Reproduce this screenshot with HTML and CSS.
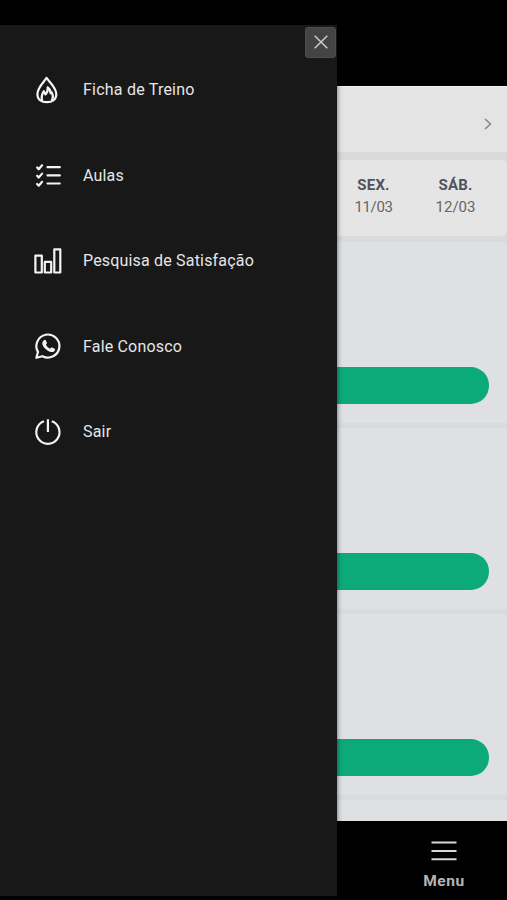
FILE: index.html
```html
<!DOCTYPE html>
<html lang="pt-BR">
<head>
<meta charset="utf-8">
<title>Menu</title>
<link rel="stylesheet" href="styles.css">
</head>
<body>
<div class="app">
  <aside class="drawer">
    <div class="drawer-head">
      <button class="close" aria-label="Fechar"><svg width="16" height="16" viewBox="0 0 16 16"><path d="M1.7 1.7 14.3 14.3M14.3 1.7 1.7 14.3"/></svg></button>
    </div>
    <nav class="nav">
      <a class="item">
        <svg class="icon" viewBox="0 0 30 30"><path d="M13.6 2.8C11 7.2 4.4 12.2 4.4 19.2c0 5.2 3.8 8 9.4 8s9.5-2.8 9.5-8C23.3 12.2 16.4 7.4 13.6 2.8Z"/><path d="M9.2 25.8c-1.3-3.7-.2-6.7 1.6-9.6l1.7 3.2c1.8-1.9 2.5-4.1 2.2-7.1 2.8 2 3 4 2.9 6l1.2-.9c1.6 3 1.4 5.4-.1 8"/></svg>
        <span class="label ficha">Ficha de Treino</span>
      </a>
      <a class="item">
        <svg class="icon" viewBox="0 0 30 30"><path d="M14.5 7.2h12.3M14.5 15.4h12.3M14.5 23.5h12.3M4.1 7.5l1.6 1.7 3.4-3.9M4.1 15.8l1.6 1.7 3.4-3.9M4.1 24l1.6 1.7 3.4-3.9" stroke-linecap="round"/></svg>
        <span class="label aulas">Aulas</span>
      </a>
      <a class="item">
        <svg class="icon" viewBox="0 0 30 30"><path d="M2.4 9.6h6.4v16.9H2.4zM11.8 15.9h6.4v10.6h-6.4zM21.3 3.4h6v23.1h-6z"/></svg>
        <span class="label pesquisa">Pesquisa de Satisfação</span>
      </a>
      <a class="item">
        <svg class="icon" viewBox="0 0 30 30"><path d="M3.4 26.8 5 20.9A11.5 11.5 0 1 1 9.5 25.2Z"/><path class="solid" d="M10.9 9.2c.7-.7 1.5-.7 1.9.1l1.1 2.5c.2.6-.3 1.1-1 1.9 1 2 2.5 3.2 4.4 4 .8-.9 1.2-1.6 1.8-1.3l2.5 1.3c.9.5.5 2-.6 2.8-1.5 1.1-3.7.7-6.5-.9-2.2-1.3-4.2-3.6-4.9-5.5-.7-1.9-.2-3.7 1.3-4.9Z"/></svg>
        <span class="label fale">Fale Conosco</span>
      </a>
      <a class="item">
        <svg class="icon" viewBox="0 0 30 30"><path d="M11 4.3a11.6 11.6 0 1 0 7.8 0M14.9 2.3v12.8"/></svg>
        <span class="label sair">Sair</span>
      </a>
    </nav>
  </aside>
  <main class="page">
    <div class="topbar"></div>
    <div class="content">
      <div class="selector"><svg width="8" height="12" viewBox="0 0 8 12"><path d="M1 1l5.5 5L1 11"/></svg></div>
      <div class="days">
        <div class="day"><b>SEX.</b><span class="d11">11/03</span></div>
        <div class="day"><b>SÁB.</b><span>12/03</span></div>
      </div>
      <section class="card first"><div class="action"></div></section>
      <section class="card"><div class="action"></div></section>
      <section class="card"><div class="action"></div></section>
      <section class="card"></section>
    </div>
    <footer class="tabbar">
      <div class="tab"><svg width="26" height="20" viewBox="0 0 26 20"><path d="M.5 1.6h25M.5 10h25M.5 18.3h25"/></svg><span>Menu</span></div>
    </footer>
  </main>
</div>
</body>
</html>
```

FILE: styles.css
```css
* { box-sizing: border-box; }
body { margin: 0; background: #000; font-family: Roboto, sans-serif; }
svg { display: block; fill: none; flex: none; }
.app { display: grid; grid-template-columns: 337px 1fr; height: 900px; overflow: hidden; }
.drawer { margin: 25px 0 4px; background: #181818; z-index: 1; box-shadow: 0 0 5px rgba(0,0,0,.6); }
.drawer-head { display: flex; justify-content: flex-end; padding: 1.5px 1px 0 0; height: 22px; }
.close { width: 31px; height: 31px; padding: 0; border: 1px solid #4d4d4d; border-radius: 3px; background: #444; display: grid; place-items: center; }
.close svg { stroke: #d0d0d0; stroke-width: 1.4; }
.nav { display: flex; flex-direction: column; }
.item { height: 85.5px; padding-left: 33px; display: flex; align-items: center; gap: 20px; }
.icon { width: 30px; height: 30px; stroke: #f4f4f4; stroke-width: 2.2; stroke-linejoin: round; }
.solid { fill: #f4f4f4; stroke: none; }
.label { padding-top: 1px; color: #e6e6e6; font-size: 16px; line-height: 20px; white-space: nowrap; letter-spacing: .18px; }
.ficha { letter-spacing: .22px; }
.page { display: flex; flex-direction: column; min-width: 0; }
.topbar { height: 86px; flex: none; }
.content { height: 735px; background: #d9dadb; overflow: hidden; border-top: 1px solid #f4f4f4; }
.selector { height: 65px; background: #e4e4e4; padding: 8px 15px 0 0; display: flex; align-items: center; justify-content: flex-end; }
.selector svg { stroke: #858585; stroke-width: 1.5; }
.days { height: 76px; margin-top: 8px; border-radius: 0 5px 5px 0; background: #e5e5e5; display: flex; padding-top: 14px; }
.day { width: 73px; display: flex; flex-direction: column; align-items: center; color: #666; font-size: 15px; line-height: 22px; }
.day + .day { width: 91px; }
.day b { color: #50535c; letter-spacing: .2px; }
.d11 { letter-spacing: -.4px; }
.card { height: 181px; margin-top: 5px; border-radius: 0 4px 4px 0; background: #dee0e2; padding-top: 125px; box-shadow: 0 0 2px #dee0e2; }
.first { margin-top: 6px; }
.action { width: 152px; height: 36.5px; background: #0caa78; border-radius: 0 18.25px 18.25px 0; }
.tabbar { height: 79px; padding-right: 44px; display: flex; justify-content: flex-end; }
.tab { width: 38px; padding-top: 20px; display: flex; flex-direction: column; align-items: center; color: #b5b5b5; font-size: 15.5px; font-weight: 700; letter-spacing: .6px; line-height: 20px; }
.tab svg { stroke: #d8d8d8; stroke-width: 2; }
.tab span { margin-top: 10px; }
```
